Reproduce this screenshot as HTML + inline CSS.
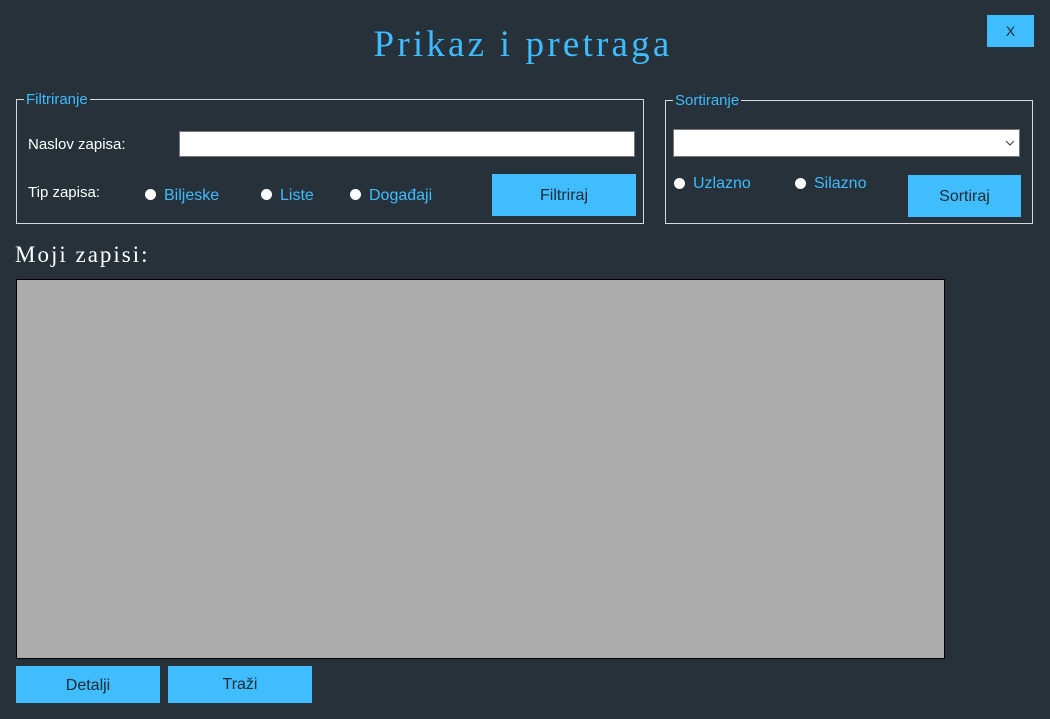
<!DOCTYPE html>
<html><head><style>
body{margin:0;width:1050px;height:719px;background:#263139;position:relative;overflow:hidden;font-family:"Liberation Sans",sans-serif;}
.a{position:absolute;}
.blue{color:#3fbcff;}
.box{position:absolute;border:1px solid #d8d8d8;}
.leg{position:absolute;background:#263139;color:#3fbcff;font-size:15px;padding:0 2px;line-height:16px;}
.btn{position:absolute;background:#40bdff;color:#1f2a33;font-size:16px;display:flex;align-items:center;justify-content:center;}
.rad{position:absolute;width:11px;height:11px;border-radius:50%;background:#fff;}
.rt{position:absolute;color:#3fbcff;font-size:16px;line-height:18px;}
.wt{position:absolute;color:#fff;font-size:15px;line-height:18px;}
</style></head><body>
<div class="a blue" style="left:0;width:1046px;top:22px;text-align:center;font-family:'Liberation Serif',serif;font-size:37px;line-height:46px;letter-spacing:3.2px;">Prikaz i pretraga</div>
<div class="btn" style="left:987px;top:15px;width:47px;height:32px;font-size:14px;">X</div>

<div class="box" style="left:16px;top:99px;width:626px;height:123px;"></div>
<div class="leg" style="left:24px;top:92px;">Filtriranje</div>
<div class="wt" style="left:28px;top:136px;">Naslov zapisa:</div>
<div class="a" style="left:179px;top:131px;width:454px;height:24px;background:#fff;border:1px solid #777;"></div>
<div class="wt" style="left:28px;top:184px;">Tip zapisa:</div>
<div class="rad" style="left:145px;top:189px;"></div><div class="rt" style="left:164px;top:187px;">Biljeske</div>
<div class="rad" style="left:261px;top:189px;"></div><div class="rt" style="left:280px;top:187px;">Liste</div>
<div class="rad" style="left:350px;top:189px;"></div><div class="rt" style="left:369px;top:187px;">Događaji</div>
<div class="btn" style="left:492px;top:174px;width:144px;height:42px;padding-top:2px;box-sizing:border-box;">Filtriraj</div>

<div class="box" style="left:665px;top:100px;width:366px;height:122px;"></div>
<div class="leg" style="left:673px;top:93px;">Sortiranje</div>
<div class="a" style="left:673px;top:129px;width:345px;height:26px;background:#fff;border:1px solid #777;"></div>
<svg class="a" style="left:1005px;top:140px" width="10" height="6"><path d="M1 1L5 5L9 1" stroke="#333" fill="none"/></svg>
<div class="rad" style="left:674px;top:178px;"></div><div class="rt" style="left:693px;top:175px;">Uzlazno</div>
<div class="rad" style="left:795px;top:178px;"></div><div class="rt" style="left:814px;top:175px;">Silazno</div>
<div class="btn" style="left:908px;top:175px;width:113px;height:42px;padding-top:2px;box-sizing:border-box;">Sortiraj</div>

<div class="a" style="left:15px;top:241px;color:#fff;font-family:'Liberation Serif',serif;font-size:23px;line-height:28px;letter-spacing:2px;">Moji zapisi:</div>
<div class="a" style="left:16px;top:279px;width:927px;height:378px;background:#ababab;border:1px solid #000;"></div>
<div class="btn" style="left:16px;top:666px;width:144px;height:37px;padding-top:2px;box-sizing:border-box;">Detalji</div>
<div class="btn" style="left:168px;top:666px;width:144px;height:37px;">Traži</div>
</body></html>
